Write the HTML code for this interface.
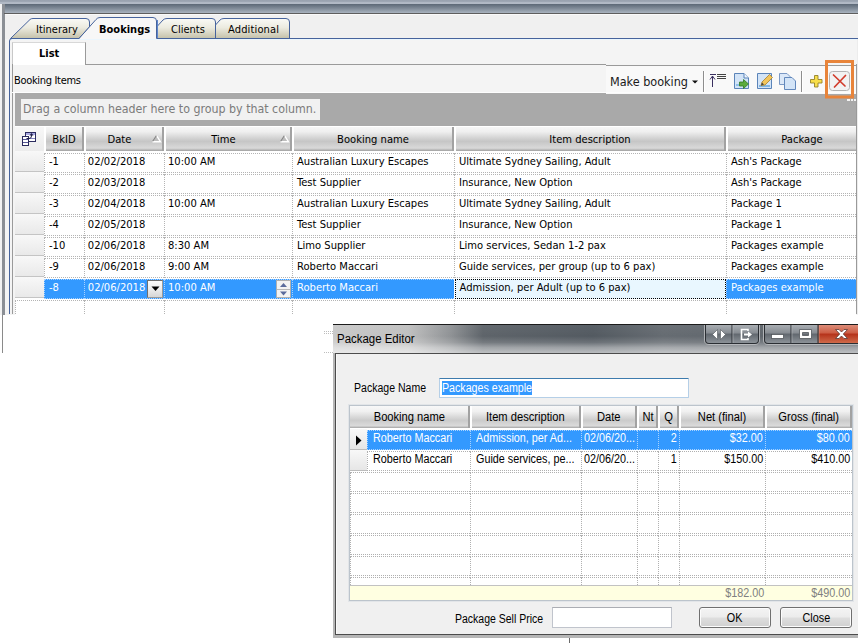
<!DOCTYPE html>
<html>
<head>
<meta charset="utf-8">
<title>Bookings</title>
<style>
html,body{margin:0;padding:0;}
body{width:858px;height:643px;overflow:hidden;background:#fff;position:relative;font-family:"DejaVu Sans Condensed","DejaVu Sans","Liberation Sans",sans-serif;font-size:11px;color:#000;}
.abs{position:absolute;}
#main{position:absolute;left:0;top:0;width:858px;height:315px;overflow:hidden;background:#f4f4f4;}
.t{position:absolute;white-space:nowrap;line-height:13px;}
/* grid */
.hd{position:absolute;top:1px;height:24px;box-sizing:border-box;text-align:center;line-height:26px;white-space:nowrap;
 background:linear-gradient(#f6f6f6 0%,#efefef 20%,#cfcfcf 50%,#c6c6c6 60%,#d9d9d9 88%,#a0a0a0 100%);
 border-left:2px solid #fff;border-right:2px solid #a2a2a2;}
.row{position:absolute;left:0;width:885px;height:20px;}
.row .c{position:absolute;top:0;height:20px;box-sizing:border-box;line-height:15px;padding-left:2.500px;white-space:nowrap;overflow:hidden;
 border-left:1px dotted #b4b4b4;border-top:1px dotted #b4b4b4;border-bottom:1px dotted #b4b4b4;background:#fff;}
.row .ind{position:absolute;left:0;top:-2px;width:29px;height:21px;box-sizing:border-box;background:linear-gradient(#f8f8f8,#e9e9e9);border-bottom:1px solid #c4c4c4;}
.row.sel .c{background:#3399ff;color:#fff;border-color:#a8d2ff;}
/* dialog */
#dlg{position:absolute;left:333px;top:324px;width:525px;height:314px;font-family:"Liberation Sans",sans-serif;font-size:12px;overflow:hidden;}
.sl,.sr,.sc{display:inline-block;transform:scaleX(0.9);white-space:nowrap;}
.sl{transform-origin:0 50%;}.sr{transform-origin:100% 50%;}.sc{transform-origin:50% 50%;}
.dh{position:absolute;top:406px;height:22px;box-sizing:border-box;text-align:center;line-height:23px;white-space:nowrap;
 background:linear-gradient(#f8f8f8 0%,#f0f0f0 25%,#d4d4d4 55%,#cbcbcb 65%,#dadada 90%,#a4a4a4 100%);
 border-left:2px solid #fff;border-right:2px solid #a2a2a2;}
.dr{position:absolute;left:350px;width:503px;height:20px;}
.dr .c{position:absolute;top:0;height:20px;box-sizing:border-box;line-height:14px;white-space:nowrap;overflow:hidden;padding-left:5px;
 border-left:1px dotted #b0b0b0;border-top:1px dotted #b0b0b0;border-bottom:1px dotted #b0b0b0;background:#fff;}
.dh .sc{transform:scaleX(0.93);}
.dr .r{text-align:right;padding-right:2px;padding-left:0;}
.dr.sel .c{background:#3399ff;color:#fff;border-color:#a8d2ff;}
.dr .ind{position:absolute;left:0;top:-1px;width:17px;height:21px;box-sizing:border-box;background:linear-gradient(#f8f8f8,#e6e6e6);border-bottom:1px solid #bcbcbc;}
.btn{position:absolute;height:21px;box-sizing:border-box;border:1px solid #707070;border-radius:3px;text-align:center;line-height:20px;
 background:linear-gradient(#f4f4f4 0%,#ececec 48%,#dedede 52%,#d0d0d0 100%);box-shadow:inset 0 0 0 1px #fcfcfc;}
</style>
</head>
<body>
<div id="main">
<!-- top window chrome -->
<div class="abs" style="left:0;top:0;width:858px;height:4px;background:linear-gradient(#98a1ae 0%,#9ea7b4 40%,#b0b8c4 60%,#b2bac6 100%);"></div>
<div class="abs" style="left:0;top:4px;width:3px;height:311px;background:#f2f2f2;"></div>
<div class="abs" style="left:2px;top:4px;width:856px;height:9px;background:linear-gradient(#5c6876,#7d8895 45%,#a9b3bf);"></div>
<div class="abs" style="left:2px;top:4px;width:3px;height:311px;background:#8b8f95;"></div>
<div class="abs" style="left:4px;top:13px;width:854px;height:1px;background:#5e5e5e;"></div>
<div class="abs" style="left:5px;top:14px;width:853px;height:25px;background:#f0f0f0;border-top:1px solid #fafafa;box-sizing:border-box;"></div>
<div class="abs" style="left:10px;top:39px;width:848px;height:1px;background:#ebf6fd;"></div>
<svg class="abs" style="left:0;top:14px" width="858" height="300" viewBox="0 14 858 300">
<defs>
<linearGradient id="tg" x1="0" y1="0" x2="0" y2="1"><stop offset="0" stop-color="#fafaf6"/><stop offset="0.45" stop-color="#ecebe0"/><stop offset="1" stop-color="#c4c1a9"/></linearGradient>
</defs>
<!-- Itinerary -->
<path d="M10.5 38.5 L30 19.5 Q31 18.5 33 18.5 L86 18.5 Q89.5 18.5 89.5 22 L89.5 27 L79 38.5 Z" fill="url(#tg)" stroke="#46639c" stroke-width="1"/>
<!-- Clients -->
<path d="M157.5 38.5 L157.5 26 L163 20 Q164.5 18.5 167 18.5 L212 18.5 Q215.5 18.5 215.5 22 L215.5 38.5 Z" fill="url(#tg)" stroke="#46639c" stroke-width="1"/>
<!-- Additional -->
<path d="M215.5 38.5 L215.5 25 L220 20 Q221.5 18.5 224 18.5 L286 18.5 Q289.5 18.5 289.5 22 L289.5 38.5 Z" fill="url(#tg)" stroke="#46639c" stroke-width="1"/>
<!-- page border -->
<path d="M9.5 314 L9.5 41 Q9.5 38.5 12 38.5 L858 38.5" fill="none" stroke="#46639c" stroke-width="1"/>
<!-- Bookings (selected) -->
<path d="M79 39 L96 19.5 Q97.5 17.5 100 17.5 L153 17.5 Q156.5 17.5 156.5 21 L156.5 39 Z" fill="#f7f7f7" stroke="none"/>
<path d="M79 38.5 L96 19.5 Q97.5 17.5 100 17.5 L153 17.5 Q156.5 17.5 156.5 21 L156.5 38.5" fill="none" stroke="#46639c" stroke-width="1"/>
<path d="M157.5 20 L157.5 38" fill="none" stroke="#5d86cc" stroke-width="1"/>
</svg>
<div class="t" style="left:36px;top:23px;">Itinerary</div>
<div class="t" style="left:99px;top:23px;font-weight:bold;">Bookings</div>
<div class="t" style="left:171px;top:23px;">Clients</div>
<div class="t" style="left:228px;top:23px;letter-spacing:0.150px;">Additional</div>
<!-- inner List tab -->
<div class="abs" style="left:12px;top:64px;width:846px;height:1px;background:#9a9a9a;"></div>
<div class="abs" style="left:12px;top:42px;width:74px;height:23px;background:#fff;border-right:1px solid #9a9a9a;border-left:1px solid #c8c8c8;border-top:1px solid #d8d8d8;box-sizing:border-box;"></div>
<div class="abs" style="left:12px;top:64px;width:1px;height:250px;background:#9a9a9a;"></div>
<div class="t" style="left:39px;top:47px;font-weight:bold;">List</div>
<div class="t" style="left:14px;top:74px;letter-spacing:-0.32px;">Booking Items</div>
<div class="abs" style="left:15px;top:93px;width:841px;height:33px;background:#a9a9a9;"></div>
<div class="abs" style="left:21px;top:99px;width:299px;height:21px;background:#f1f1f1;"></div>
<div class="t" style="left:23px;top:101px;font-size:12.3px;line-height:16px;color:#7b7b7b;">Drag a column header here to group by that column.</div>

<div class="abs" style="left:606px;top:64px;width:250px;height:30px;background:#f9f9f9;border-top:1px solid #f4f4f4;box-sizing:border-box;"></div><div class="abs" style="left:606px;top:65px;width:250px;height:1px;background:#9a9a9a;"></div>
<div class="abs" style="left:12px;top:92px;width:844px;height:1px;background:#fdfdfd;"></div>
<div class="abs" style="left:856px;top:64px;width:1px;height:250px;background:#9a9a9a;"></div>
<div class="abs" style="left:857px;top:39px;width:1px;height:275px;background:#ececec;"></div>
<div class="t" id="mk" style="left:610px;top:73.500px;font-family:'DejaVu Sans Condensed','Liberation Sans',sans-serif;font-size:12.5px;line-height:16px;color:#1a1a1a;">Make booking</div>
<svg class="abs" style="left:600px;top:58px" width="258" height="46" viewBox="600 58 258 46">
<path d="M692 80.5 L698 80.5 L695 83.5 Z" fill="#111"/>
<rect x="703" y="71" width="1" height="21" fill="#8e8e8e"/><rect x="704" y="71" width="1" height="21" fill="#fff"/>
<!-- move to top icon -->
<g stroke="#3a3060" stroke-width="1" fill="none" shape-rendering="crispEdges">
<path d="M710 74.5 H716 M712.5 76 V87"/>
</g>
<path d="M710 79.5 L712.5 76 L715 79.5" stroke="#3a3060" stroke-width="1" fill="none"/>
<g stroke="#444" stroke-width="1" shape-rendering="crispEdges"><path d="M717 74.5 H726 M717 76.5 H726 M717 78.5 H726"/></g>
<!-- page with green arrow -->
<path d="M734.5 73.5 H744 L748.5 78 V88.500 H734.500 Z" fill="#d3e4f7" stroke="#5b84b9"/>
<path d="M744 73.500 V78 H748.500" fill="#eef5fc" stroke="#5b84b9"/>
<rect x="736" y="84" width="6" height="2" fill="#8fc0e8"/>
<path d="M739.5 82 H743.5 V79.5 L748.5 84 L743.5 88.5 V86 H739.5 Z" fill="#5cab3c" stroke="#2f7a22" stroke-width="0.8"/>
<!-- page with pencil -->
<path d="M757.5 73.500 H771.500 V88.500 H757.500 Z" fill="#d3e4f7" stroke="#5b84b9"/>
<rect x="759" y="85" width="11" height="2" fill="#7fb6e4"/>
<path d="M761 85.500 L762 82 L769.500 74.500 L772.500 77.500 L765 85 Z" fill="#f2c55c" stroke="#a8802c" stroke-width="0.8"/>
<path d="M761 85.500 L762 82.500 L764 84.500 Z" fill="#444"/>
<!-- copy -->
<path d="M779.500 73.500 H787 L790.500 77 V84.500 H779.500 Z" fill="#dbe8f8" stroke="#7a98c4"/>
<path d="M784.500 77.500 H792 L795.500 81 V89.500 H784.500 Z" fill="#d3e4f7" stroke="#6288bc"/>
<rect x="801" y="71" width="1" height="21" fill="#8e8e8e"/><rect x="802" y="71" width="1" height="21" fill="#fff"/>
<!-- plus -->
<path d="M814.500 75.500 H818 V79.500 H822 V83 H818 V87 H814.500 V83 H810.500 V79.500 H814.500 Z" fill="#f8de4a" stroke="#94822a" stroke-width="0.900"/>
<!-- delete button -->
<rect x="829.500" y="71.500" width="20" height="19" rx="3" ry="3" fill="#f2f2f2" stroke="#b4b4b4"/>
<path d="M833.500 75 L845 86 M845.500 75.500 L834.500 87" stroke="#d23c2c" stroke-width="1.7" fill="none" stroke-linecap="round"/>
<!-- highlight rect -->
<rect x="826.500" y="61.500" width="26" height="35.500" fill="none" stroke="#e8843a" stroke-width="3"/>
<rect x="847" y="99" width="3" height="2" fill="#f4f4f4"/><rect x="851" y="99" width="2" height="2" fill="#f4f4f4"/><rect x="854" y="99" width="2" height="2" fill="#f4f4f4"/>
</svg>

<div class="abs" style="left:15px;top:126px;width:841px;height:189px;background:#fff;overflow:hidden;font-size:11.100px;" id="grid">
<div class="abs" style="left:0;top:1px;width:29px;height:24px;background:linear-gradient(#f7f7f7,#ececec);"></div>
<div class="hd" style="left:29px;width:40px;">BkID</div>
<div class="hd" style="left:69px;width:80px;padding-right:9px;">Date</div>
<div class="hd" style="left:149px;width:128px;padding-right:9px;">Time</div>
<div class="hd" style="left:277px;width:162px;">Booking name</div>
<div class="hd" style="left:439px;width:272px;">Item description</div>
<div class="hd" style="left:711px;width:152px;">Package</div>
<svg class="abs" style="left:6px;top:5px" width="16" height="17" viewBox="21 131 16 17">
<rect x="25.500" y="132.500" width="10" height="9" fill="#fff" stroke="#2b2b5e"/>
<rect x="26" y="133" width="9" height="2" fill="#a9a9e2"/>
<rect x="26" y="138" width="9" height="1" fill="#8484c0"/>
<rect x="22.500" y="136.500" width="6" height="9" fill="#fff" stroke="#2b2b5e"/>
<rect x="23" y="139" width="5" height="1" fill="#5a5a98"/><rect x="23" y="142" width="5" height="1" fill="#5a5a98"/>
<path d="M26.500 138.500 H29 Q31.500 138.500 31.500 136 V134" fill="none" stroke="#1e1e48" stroke-width="1"/>
<path d="M29.500 135.500 L31.500 133 L33.500 135.500 Z" fill="#1e1e48"/>
</svg>
<svg class="abs" style="left:136px;top:8px" width="11" height="9" viewBox="0 0 11 9"><path d="M5.500 2 L2 7.500 H9 Z" fill="#bdbdbd"/><path d="M1.500 7.700 H9.500 L5.700 1.800" fill="none" stroke="#fff" stroke-width="1.400"/><path d="M5.300 1.800 L1.700 7.200" stroke="#848484" stroke-width="1.100" fill="none"/></svg>
<svg class="abs" style="left:264px;top:8px" width="11" height="9" viewBox="0 0 11 9"><path d="M5.500 2 L2 7.500 H9 Z" fill="#bdbdbd"/><path d="M1.500 7.700 H9.500 L5.700 1.800" fill="none" stroke="#fff" stroke-width="1.400"/><path d="M5.300 1.800 L1.700 7.200" stroke="#848484" stroke-width="1.100" fill="none"/></svg>
<div class="row" style="top:27px;"><div class="ind"></div><div class="c" style="left:29px;width:40px;padding-left:4px;">-1</div><div class="c" style="left:69px;width:80px;padding-left:2.800px;">02/02/2018</div><div class="c" style="left:149px;width:128px;padding-left:3px;">10:00 AM</div><div class="c" style="left:277px;width:162px;padding-left:4px;">Australian Luxury Escapes</div><div class="c" style="left:439px;width:272px;padding-left:4px;">Ultimate Sydney Sailing, Adult</div><div class="c" style="left:711px;width:174px;padding-left:4px;">Ash's Package</div></div>
<div class="row" style="top:48px;"><div class="ind"></div><div class="c" style="left:29px;width:40px;padding-left:4px;">-2</div><div class="c" style="left:69px;width:80px;padding-left:2.800px;">02/03/2018</div><div class="c" style="left:149px;width:128px;padding-left:3px;"></div><div class="c" style="left:277px;width:162px;padding-left:4px;">Test Supplier</div><div class="c" style="left:439px;width:272px;padding-left:4px;">Insurance, New Option</div><div class="c" style="left:711px;width:174px;padding-left:4px;">Ash's Package</div></div>
<div class="row" style="top:69px;"><div class="ind"></div><div class="c" style="left:29px;width:40px;padding-left:4px;">-3</div><div class="c" style="left:69px;width:80px;padding-left:2.800px;">02/04/2018</div><div class="c" style="left:149px;width:128px;padding-left:3px;">10:00 AM</div><div class="c" style="left:277px;width:162px;padding-left:4px;">Australian Luxury Escapes</div><div class="c" style="left:439px;width:272px;padding-left:4px;">Ultimate Sydney Sailing, Adult</div><div class="c" style="left:711px;width:174px;padding-left:4px;">Package 1</div></div>
<div class="row" style="top:90px;"><div class="ind"></div><div class="c" style="left:29px;width:40px;padding-left:4px;">-4</div><div class="c" style="left:69px;width:80px;padding-left:2.800px;">02/05/2018</div><div class="c" style="left:149px;width:128px;padding-left:3px;"></div><div class="c" style="left:277px;width:162px;padding-left:4px;">Test Supplier</div><div class="c" style="left:439px;width:272px;padding-left:4px;">Insurance, New Option</div><div class="c" style="left:711px;width:174px;padding-left:4px;">Package 1</div></div>
<div class="row" style="top:111px;"><div class="ind"></div><div class="c" style="left:29px;width:40px;padding-left:4px;">-10</div><div class="c" style="left:69px;width:80px;padding-left:2.800px;">02/06/2018</div><div class="c" style="left:149px;width:128px;padding-left:3px;">8:30 AM</div><div class="c" style="left:277px;width:162px;padding-left:4px;">Limo Supplier</div><div class="c" style="left:439px;width:272px;padding-left:4px;">Limo services, Sedan 1-2 pax</div><div class="c" style="left:711px;width:174px;padding-left:4px;">Packages example</div></div>
<div class="row" style="top:132px;"><div class="ind"></div><div class="c" style="left:29px;width:40px;padding-left:4px;">-9</div><div class="c" style="left:69px;width:80px;padding-left:2.800px;">02/06/2018</div><div class="c" style="left:149px;width:128px;padding-left:3px;">9:00 AM</div><div class="c" style="left:277px;width:162px;padding-left:4px;">Roberto Maccari</div><div class="c" style="left:439px;width:272px;padding-left:4px;">Guide services, per group (up to 6 pax)</div><div class="c" style="left:711px;width:174px;padding-left:4px;">Packages example</div></div>
<div class="row sel" style="top:153px;"><div class="ind"></div><div class="c" style="left:29px;width:40px;padding-left:4px;">-8</div><div class="c" style="left:69px;width:80px;padding-left:2.800px;">02/06/2018</div><div class="c" style="left:149px;width:128px;padding-left:3px;">10:00 AM</div><div class="c" style="left:277px;width:162px;padding-left:4px;">Roberto Maccari</div><div class="c" style="left:439px;width:272px;padding-left:4.500px;background:#e9f7ff;color:#000;border:1px dotted #000;border-right:1px dotted #000;left:440px;width:271px;padding-left:3.500px;">Admission, per Adult (up to 6 pax)</div><div class="c" style="left:711px;width:174px;padding-left:4px;">Packages example</div></div>
<div class="abs" style="left:132px;top:154px;width:16px;height:18px;box-sizing:border-box;border:1px solid #6e6e6e;border-right-color:#9a9a9a;border-bottom-color:#9a9a9a;background:linear-gradient(#fbfbfb,#ececec 50%,#d6d6d6);"></div>
<svg class="abs" style="left:136px;top:160px" width="9" height="6" viewBox="0 0 9 6"><path d="M0.500 0.500 H8.500 L4.500 5 Z" fill="#000"/></svg>
<div class="abs" style="left:261px;top:154px;width:15px;height:18px;box-sizing:border-box;border:1px solid #b0b0b0;background:#f3f3f3;"></div>
<div class="abs" style="left:262px;top:163px;width:13px;height:1px;background:#b8b8b8;"></div>
<svg class="abs" style="left:264px;top:156px" width="9" height="14" viewBox="0 0 9 14"><path d="M1 5 L4.500 1 L8 5 Z" fill="#5b6b9c"/><path d="M1 9.500 L4.500 13.500 L8 9.500 Z" fill="#5b6b9c"/></svg>
<div class="row new" style="top:174px;"><div class="c" style="left:0;width:69px;"></div><div class="c" style="left:69px;width:80px;padding-left:2.800px;"></div><div class="c" style="left:149px;width:128px;padding-left:3px;"></div><div class="c" style="left:277px;width:162px;padding-left:4px;"></div><div class="c" style="left:439px;width:272px;padding-left:4px;"></div><div class="c" style="left:711px;width:174px;padding-left:4px;"></div></div>
</div>


</div>
<div class="abs" style="left:324px;top:331px;width:9px;height:3px;box-sizing:border-box;border-top:1px dotted #bdbdbd;border-bottom:1px dotted #bdbdbd;"></div>
<div class="abs" style="left:324px;top:352px;width:9px;height:1px;box-sizing:border-box;border-top:1px dotted #bdbdbd;"></div>
<!-- left thin line -->
<div class="abs" style="left:2px;top:315px;width:1px;height:38px;background:#8a8a8a;"></div>
<div class="abs" style="left:333px;top:324px;width:525px;height:314px;background:#b6b6b6;"></div>
<div class="abs" style="left:333px;top:324px;width:525px;height:1px;background:#1c1c1c;"></div>
<div class="abs" style="left:333px;top:325px;width:525px;height:28px;background:linear-gradient(90deg,#c9c9c9 0px,#c0c0c0 75px,#8f9295 118px,#5e646a 150px,#535a61 260px,#666c72 330px,#5a6067 525px);"></div>
<div class="abs" style="left:333px;top:325px;width:525px;height:28px;background:linear-gradient(rgba(255,255,255,0.04) 0%,rgba(255,255,255,0) 40%,rgba(255,255,255,0.14) 62%,rgba(255,255,255,0.42) 80%,rgba(255,255,255,0.6) 100%);"></div>
<div class="t" style="left:336.500px;top:332px;font-family:'Liberation Sans',sans-serif;font-size:12px;line-height:15px;"><span class="sl" style="transform:scaleX(0.953)">Package Editor</span></div>
<svg class="abs" style="left:700px;top:325px" width="158" height="22" viewBox="700 325 158 22">
<defs>
<linearGradient id="gb" x1="0" y1="0" x2="0" y2="1"><stop offset="0" stop-color="#a9aeb3"/><stop offset="0.45" stop-color="#868b91"/><stop offset="0.5" stop-color="#61676e"/><stop offset="1" stop-color="#8c9298"/></linearGradient>
<linearGradient id="rb" x1="0" y1="0" x2="0" y2="1"><stop offset="0" stop-color="#dd8d79"/><stop offset="0.45" stop-color="#cc5c43"/><stop offset="0.5" stop-color="#b5321a"/><stop offset="1" stop-color="#cf6a4a"/></linearGradient>
</defs>
<path d="M704.500 324 V340 Q704.500 344.500 709 344.500 H755 Q759.500 344.500 759.500 340 V324 Z" fill="#2a2e33" stroke="#d4d6d8" stroke-width="1" stroke-opacity="0.75"/>
<path d="M706 325 H758 V340 Q758 343 755 343 H709 Q706 343 706 340 Z" fill="url(#gb)"/>
<rect x="731.500" y="325" width="1" height="19" fill="#2f3338"/><rect x="732.500" y="325" width="1" height="18" fill="#b5b9bd" opacity="0.6"/>
<path d="M763.500 324 V340 Q763.500 344.500 768 344.500 H860 V324 Z" fill="#2a2e33" stroke="#d4d6d8" stroke-width="1" stroke-opacity="0.75"/>
<path d="M765 325 H818 V343 H768 Q765 343 765 340 Z" fill="url(#gb)"/>
<path d="M819 325 H858 V343 H819 Z" fill="url(#rb)"/>
<rect x="790.500" y="325" width="1" height="19" fill="#2f3338"/><rect x="791.500" y="325" width="1" height="18" fill="#b5b9bd" opacity="0.6"/>
<rect x="817.500" y="325" width="1" height="19" fill="#3a2a28"/><rect x="818.500" y="325" width="1" height="18" fill="#e8a898" opacity="0.6"/>
<!-- icons -->
<path d="M717.500 329.500 V339.500 L712.500 334.500 Z M720.500 329.500 V339.500 L725.500 334.500 Z" fill="#fff" stroke="#50555a" stroke-width="0.6"/>
<path d="M748 331 V329.500 H741.500 V339.500 H748 V338" fill="none" stroke="#fff" stroke-width="1.6"/>
<path d="M744 333.500 H748 V331.500 L752 334.500 L748 337.500 V335.500 H744 Z" fill="#fff"/>
<rect x="771.500" y="334.500" width="12" height="4" fill="#fff" stroke="#50555a" stroke-width="0.8"/>
<path d="M799.500 329.500 H811.500 V338.500 H799.500 Z M802.500 332.500 V335.500 H808.500 V332.500 Z" fill="#fff" fill-rule="evenodd" stroke="#50555a" stroke-width="0.8"/>
<path d="M835.500 329.500 H839 L841.500 332 L844 329.500 H847.500 L843.300 334 L847.500 338.500 H844 L841.500 336 L839 338.500 H835.500 L839.700 334 Z" fill="#fff" stroke="#5a3a36" stroke-width="0.8"/>
</svg>

<div class="abs" style="left:335px;top:353px;width:523px;height:282px;background:#4c4c4c;"></div>
<div class="abs" style="left:336px;top:354px;width:522px;height:280px;background:#f0f0f0;border-left:1px solid #fafafa;box-sizing:border-box;" ></div>
<div class="t" style="left:354px;top:381px;font-family:'Liberation Sans',sans-serif;font-size:12px;line-height:15px;"><span class="sl" style="transform:scaleX(0.878)">Package Name</span></div>
<div class="abs" style="left:439px;top:378px;width:250px;height:20px;box-sizing:border-box;background:#fff;border:1px solid #b5cfe7;border-top-color:#3d7bad;border-radius:1px;"></div>
<div class="abs" style="left:442px;top:381px;width:90px;height:14px;background:#3399ff;"></div>
<div class="t" style="left:442px;top:381px;font-family:'Liberation Sans',sans-serif;font-size:12px;line-height:15px;color:#fff;"><span class="sl" style="transform:scaleX(0.888)">Packages example</span></div>
<div class="abs" style="left:349px;top:405px;width:504px;height:196px;box-sizing:border-box;background:#fff;border:1px solid #bcc4cc;outline:1px solid #e2e5e8;"></div>
<div id="dg" class="abs" style="left:0;top:0;width:858px;height:643px;font-family:'Liberation Sans',sans-serif;font-size:12px;">
<div class="dh" style="left:350px;width:120px;border-left:none;"><span class="sc">Booking name</span></div>
<div class="dh" style="left:470px;width:111px;"><span class="sc">Item description</span></div>
<div class="dh" style="left:581px;width:56px;"><span class="sc">Date</span></div>
<div class="dh" style="left:637px;width:21px;"><span class="sc">Nt</span></div>
<div class="dh" style="left:658px;width:21px;"><span class="sc">Q</span></div>
<div class="dh" style="left:679px;width:86px;"><span class="sc">Net (final)</span></div>
<div class="dh" style="left:765px;width:87px;"><span class="sc">Gross (final)</span></div>
<div class="dr sel" style="top:430px;"><div class="ind"></div><div class="c" style="left:17px;width:103px;"><span class="sl">Roberto Maccari</span></div><div class="c" style="left:120px;width:111px;"><span class="sl">Admission, per Ad...</span></div><div class="c" style="left:231px;width:56px;padding-left:1.500px;"><span class="sl">02/06/20...</span></div><div class="c" style="left:287px;width:21px;"><span class="sl"></span></div><div class="c r" style="left:308px;width:21px;"><span class="sr">2</span></div><div class="c r" style="left:329px;width:86px;"><span class="sr">$32.00</span></div><div class="c r" style="left:415px;width:87px;"><span class="sr">$80.00</span></div></div>
<div class="dr" style="top:451px;"><div class="ind"></div><div class="c" style="left:17px;width:103px;"><span class="sl">Roberto Maccari</span></div><div class="c" style="left:120px;width:111px;"><span class="sl">Guide services, pe...</span></div><div class="c" style="left:231px;width:56px;padding-left:1.500px;"><span class="sl">02/06/20...</span></div><div class="c" style="left:287px;width:21px;"><span class="sl"></span></div><div class="c r" style="left:308px;width:21px;"><span class="sr">1</span></div><div class="c r" style="left:329px;width:86px;"><span class="sr">$150.00</span></div><div class="c r" style="left:415px;width:87px;"><span class="sr">$410.00</span></div></div>
<div class="dr" style="top:472px;height:20px;overflow:hidden;"><div class="c" style="left:0px;width:120px;"></div><div class="c" style="left:120px;width:111px;"></div><div class="c" style="left:231px;width:56px;"></div><div class="c" style="left:287px;width:21px;"></div><div class="c" style="left:308px;width:21px;"></div><div class="c" style="left:329px;width:86px;"></div><div class="c" style="left:415px;width:87px;"></div></div>
<div class="dr" style="top:493px;height:20px;overflow:hidden;"><div class="c" style="left:0px;width:120px;"></div><div class="c" style="left:120px;width:111px;"></div><div class="c" style="left:231px;width:56px;"></div><div class="c" style="left:287px;width:21px;"></div><div class="c" style="left:308px;width:21px;"></div><div class="c" style="left:329px;width:86px;"></div><div class="c" style="left:415px;width:87px;"></div></div>
<div class="dr" style="top:514px;height:20px;overflow:hidden;"><div class="c" style="left:0px;width:120px;"></div><div class="c" style="left:120px;width:111px;"></div><div class="c" style="left:231px;width:56px;"></div><div class="c" style="left:287px;width:21px;"></div><div class="c" style="left:308px;width:21px;"></div><div class="c" style="left:329px;width:86px;"></div><div class="c" style="left:415px;width:87px;"></div></div>
<div class="dr" style="top:535px;height:20px;overflow:hidden;"><div class="c" style="left:0px;width:120px;"></div><div class="c" style="left:120px;width:111px;"></div><div class="c" style="left:231px;width:56px;"></div><div class="c" style="left:287px;width:21px;"></div><div class="c" style="left:308px;width:21px;"></div><div class="c" style="left:329px;width:86px;"></div><div class="c" style="left:415px;width:87px;"></div></div>
<div class="dr" style="top:556px;height:20px;overflow:hidden;"><div class="c" style="left:0px;width:120px;"></div><div class="c" style="left:120px;width:111px;"></div><div class="c" style="left:231px;width:56px;"></div><div class="c" style="left:287px;width:21px;"></div><div class="c" style="left:308px;width:21px;"></div><div class="c" style="left:329px;width:86px;"></div><div class="c" style="left:415px;width:87px;"></div></div>
<div class="dr" style="top:577px;height:8px;overflow:hidden;"><div class="c" style="left:0px;width:120px;"></div><div class="c" style="left:120px;width:111px;"></div><div class="c" style="left:231px;width:56px;"></div><div class="c" style="left:287px;width:21px;"></div><div class="c" style="left:308px;width:21px;"></div><div class="c" style="left:329px;width:86px;"></div><div class="c" style="left:415px;width:87px;"></div></div>
<svg class="abs" style="left:355px;top:435px" width="8" height="11" viewBox="0 0 8 11"><path d="M1 0.5 L6.5 5.500 L1 10.500 Z" fill="#000"/></svg>
<div class="abs" style="left:350px;top:585px;width:502px;height:15px;background:#ffffe1;border-top:1px solid #c2c2c2;box-sizing:border-box;"></div>
<div class="t" style="left:679px;top:586px;width:85px;text-align:right;color:#808080;line-height:15px;"><span class="sr">$182.00</span></div>
<div class="t" style="left:765px;top:586px;width:85px;text-align:right;color:#808080;line-height:15px;"><span class="sr">$490.00</span></div>
<div class="t" style="left:455px;top:612px;line-height:15px;"><span class="sl" style="transform:scaleX(0.875)">Package Sell Price</span></div>
<div class="abs" style="left:552px;top:607px;width:120px;height:21px;box-sizing:border-box;background:#fff;border:1px solid #c0c4cc;border-top-color:#abadb3;"></div>
<div class="btn" style="left:699px;top:607px;width:72px;"><span class="sc">OK</span></div>
<div class="btn" style="left:780px;top:607px;width:72px;"><span class="sc">Close</span></div>
</div>
<div class="abs" style="left:569px;top:638px;width:1px;height:5px;background:#6a6a6a;"></div>

</body>
</html>
